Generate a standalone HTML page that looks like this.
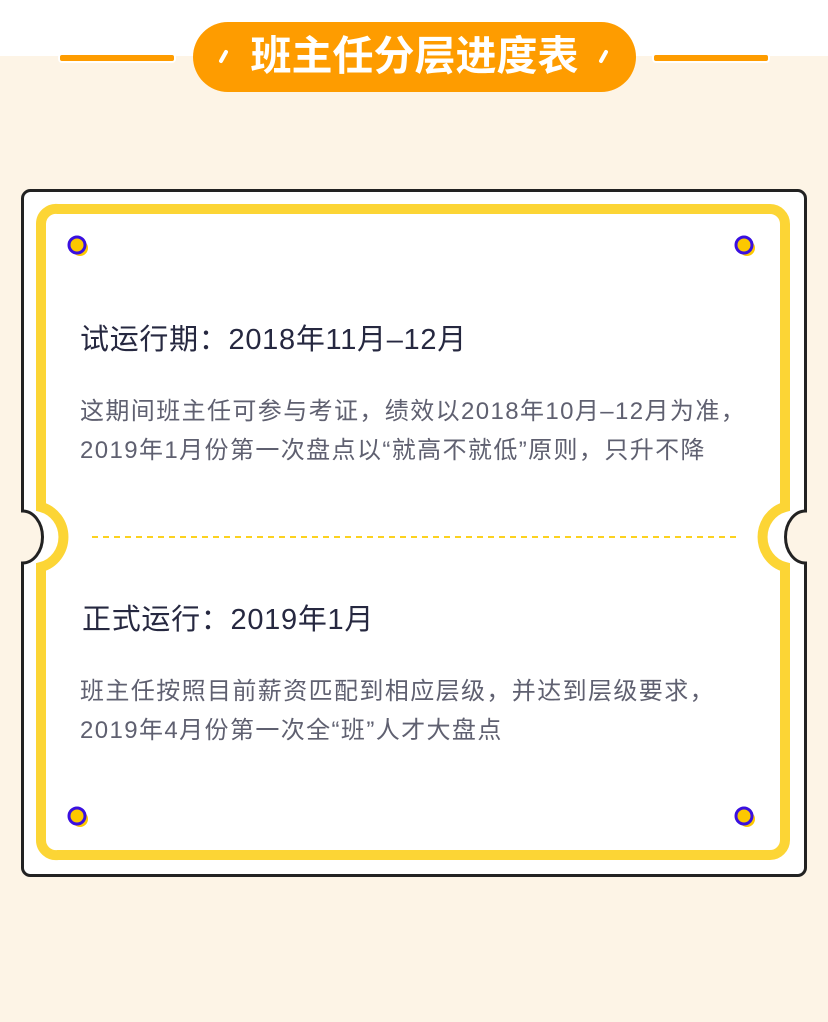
<!DOCTYPE html>
<html><head><meta charset="utf-8"><style>
html,body{margin:0;padding:0}
body{width:828px;height:1022px;background:#fdf4e6;position:relative;overflow:hidden;font-family:"Liberation Sans","Noto Sans CJK SC",sans-serif}
.top{position:absolute;left:0;top:0;width:828px;height:56px;background:#fff}
.line{position:absolute;top:53px;height:6px;background:#fe9c00;border:2px solid #fff;border-radius:4px}
.pill{position:absolute;left:193px;top:22px;width:443px;height:70px;border-radius:35px;background:#fe9c00;color:#fff;font-weight:bold;font-size:41px;text-align:center;line-height:68px;letter-spacing:0px}
.t{position:absolute;color:#262840;font-size:29px;letter-spacing:0.7px;white-space:nowrap;line-height:34px}
.b{position:absolute;color:#5f6070;font-size:24px;letter-spacing:1.4px;white-space:nowrap;line-height:39px}
</style></head><body>
<div class="top"></div>
<div class="line" style="left:58px;width:114px"></div>
<div class="line" style="left:652px;width:114px"></div>
<div class="pill">班主任分层进度表</div>
<svg style="position:absolute;left:0;top:0" width="828" height="1022">
<g fill="none" stroke="#fff" stroke-width="4" stroke-linecap="round">
<line x1="221" y1="61" x2="226" y2="52"/><line x1="601" y1="61" x2="606" y2="52"/></g>
<path d="M31,190.5 H797 A8,8 0 0 1 805.5,198.5 V511 A20,26 0 0 0 805.5,563 V867 A8,8 0 0 1 797,875.5 H31 A8,8 0 0 1 22.5,867 V563 A20,26 0 0 0 22.5,511 V198.5 A8,8 0 0 1 31,190.5Z" fill="#fff" stroke="#222" stroke-width="3"/>
<path d="M58,209 H770 A15,15 0 0 1 785,224 V507 A30,31 0 0 0 785,567 V840 A15,15 0 0 1 770,855 H58 A15,15 0 0 1 41,840 V567 A30,31 0 0 0 41,507 V224 A15,15 0 0 1 58,209Z" fill="none" stroke="#fcd535" stroke-width="10"/>
<line x1="92" y1="537" x2="736" y2="537" stroke="#fcd21f" stroke-width="2" stroke-dasharray="6,5"/>
<g>
<circle cx="80" cy="248" r="8" fill="#fcc800"/><circle cx="77" cy="245" r="8" fill="#fcc800" stroke="#3a10e0" stroke-width="3"/>
<circle cx="747" cy="248" r="8" fill="#fcc800"/><circle cx="744" cy="245" r="8" fill="#fcc800" stroke="#3a10e0" stroke-width="3"/>
<circle cx="80" cy="819" r="8" fill="#fcc800"/><circle cx="77" cy="816" r="8" fill="#fcc800" stroke="#3a10e0" stroke-width="3"/>
<circle cx="747" cy="819" r="8" fill="#fcc800"/><circle cx="744" cy="816" r="8" fill="#fcc800" stroke="#3a10e0" stroke-width="3"/>
</g>
</svg>
<div class="t" style="left:80px;top:323px">试运行期：2018年11月–12月</div>
<div class="b" style="left:80px;top:392px">这期间班主任可参与考证，绩效以2018年10月–12月为准，<br>2019年1月份第一次盘点以“就高不就低”原则，只升不降</div>
<div class="t" style="left:82px;top:603px">正式运行：2019年1月</div>
<div class="b" style="left:80px;top:672px">班主任按照目前薪资匹配到相应层级，并达到层级要求，<br>2019年4月份第一次全“班”人才大盘点</div>
</body></html>
